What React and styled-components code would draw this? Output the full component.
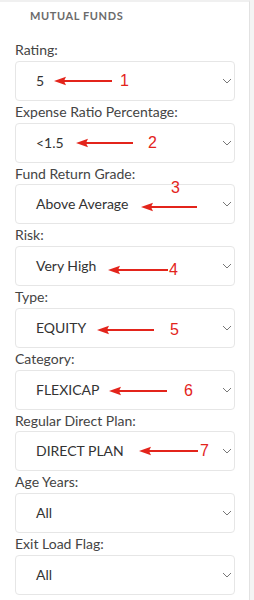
import React from "react";
import styled, { createGlobalStyle } from "styled-components";

const Global = createGlobalStyle`
  html, body { margin: 0; padding: 0; background: #f4f4f4; }
  body { font-family: Lato, "Open Sans", sans-serif; }
`;

const Sidebar = styled.aside`
  width: 250px;
  min-height: 600px;
  box-sizing: border-box;
  background: #fff;
  border-right: 1px solid #e2e2e2;
  border-top: 2px solid #f0f0f0;
  padding: 0 14px 0 15px;
  display: flex;
  flex-direction: column;
`;

const Header = styled.h2`
  margin: 0;
  padding: 6px 0 0 15px;
  height: 37px;
  box-sizing: border-box;
  font-size: 11px;
  line-height: 16px;
  font-weight: 700;
  letter-spacing: 0.6px;
  color: #6b6b6b;
  text-transform: uppercase;
`;

const Field = styled.div`
  display: flex;
  flex-direction: column;
`;

const Label = styled.label`
  font-size: 14px;
  line-height: 21.75px;
  color: #444;
`;

const Box = styled.div`
  position: relative;
  height: 40px;
  box-sizing: border-box;
  border: 1px solid #e6e6e6;
  border-radius: 4px;
  display: flex;
  align-items: center;
  justify-content: space-between;
  padding: 0 2px 0 20px;
  font-size: 14px;
  color: #333;
`;

const Value = styled.span`
  line-height: 1;
`;

const Chevron = styled.svg`
  width: 10px;
  height: 6px;
  display: block;
`;

const Arrow = styled.svg`
  position: absolute;
  height: 10px;
  overflow: visible;
  pointer-events: none;
`;

const Num = styled.span`
  position: absolute;
  font-family: "Liberation Sans", Arial, sans-serif;
  font-size: 16px;
  line-height: 16px;
  color: #e3241b;
  transform: translateY(-50%);
`;

const fields = [
  { label: "Rating:", value: "5", a: { tip: 38, end: 96, y: 19.5, nx: 104, ny: 19.5 } },
  { label: "Expense Ratio Percentage:", value: "<1.5", a: { tip: 60, end: 117, y: 19, nx: 132, ny: 19 } },
  { label: "Fund Return Grade:", value: "Above Average", a: { tip: 125, end: 181, y: 22, nx: 155, ny: 2.5 } },
  { label: "Risk:", value: "Very High", a: { tip: 92, end: 152, y: 23, nx: 153, ny: 23 } },
  { label: "Type:", value: "EQUITY", a: { tip: 81, end: 138, y: 21, nx: 154, ny: 21 } },
  { label: "Category:", value: "FLEXICAP", a: { tip: 93, end: 151, y: 20, nx: 168, ny: 20 } },
  { label: "Regular Direct Plan:", value: "DIRECT PLAN", a: { tip: 123, end: 182, y: 19, nx: 184, ny: 19 } },
  { label: "Age Years:", value: "All" },
  { label: "Exit Load Flag:", value: "All" },
];

function Annotation({ n, tip, end, y, nx, ny }) {
  const w = end - tip;
  return (
    <>
      <Arrow viewBox={`0 0 ${w} 10`} style={{ left: tip, top: y - 5, width: w }}>
        <line x1="8" y1="5" x2={w} y2="5" stroke="#e3241b" strokeWidth="2" />
        <polygon points="0,5 12,0.8 10,5 12,9.2" fill="#e3241b" />
      </Arrow>
      <Num style={{ left: nx, top: ny }}>{n}</Num>
    </>
  );
}

export default function App() {
  return (
    <>
      <Global />
      <Sidebar>
        <Header>Mutual Funds</Header>
        {fields.map((f, i) => (
          <Field key={f.label}>
            <Label>{f.label}</Label>
            <Box>
              <Value>{f.value}</Value>
              <Chevron viewBox="0 0 10 6">
                <polyline points="1,1 5,5 9,1" fill="none" stroke="#777" strokeWidth="1" />
              </Chevron>
              {f.a && <Annotation n={i + 1} {...f.a} />}
            </Box>
          </Field>
        ))}
      </Sidebar>
    </>
  );
}
